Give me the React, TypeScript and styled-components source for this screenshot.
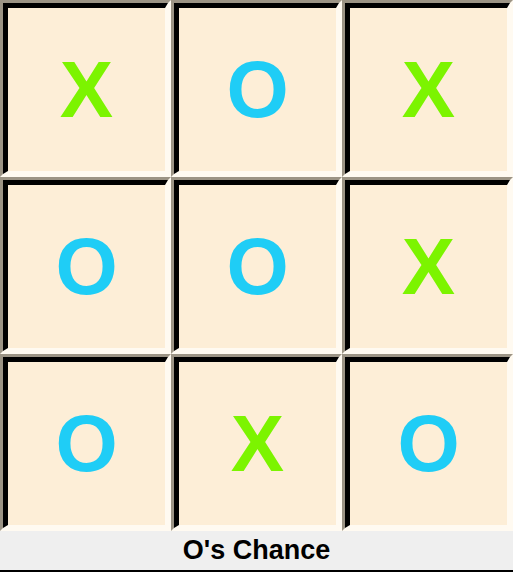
import styled, { createGlobalStyle } from "styled-components";

const GlobalStyle = createGlobalStyle`
  html, body {
    margin: 0;
    padding: 0;
    background: #ffffff;
    font-family: "Liberation Sans", Arial, sans-serif;
  }
`;

const Wrapper = styled.div`
  width: 513px;
  display: flex;
  flex-direction: column;
`;

const Board = styled.div`
  display: grid;
  grid-template-columns: repeat(3, 171px);
  grid-template-rows: repeat(3, 177px);
`;

const Cell = styled.button`
  box-sizing: border-box;
  margin: 0;
  padding: 0;
  border-style: solid;
  border-width: 3px;
  border-color: #9c9485 #fffaf1 #fffaf1 #9c9485;
  background: papayawhip;
  cursor: pointer;
  display: flex;
`;

const Face = styled.div`
  box-sizing: border-box;
  flex: 1;
  border-style: solid;
  border-width: 5px 3px 3px 5px;
  border-color: #000 #fffaf1 #fffaf1 #000;
  background: #fdeed7;
  display: flex;
  align-items: center;
  justify-content: center;
`;

const Mark = styled.span<{ $player: "X" | "O" }>`
  font-family: "Liberation Sans", Arial, sans-serif;
  font-weight: bold;
  font-size: 80px;
  line-height: 1;
  color: ${(p) => (p.$player === "X" ? "#7cf400" : "#1fcdf6")};
`;

const Status = styled.div`
  box-sizing: border-box;
  height: 41px;
  background: #efefef;
  border-bottom: 2px solid #000;
  display: flex;
  align-items: center;
  justify-content: center;
  font-weight: bold;
  font-size: 27px;
  color: #000;
`;

const board: ("X" | "O")[] = ["X", "O", "X", "O", "O", "X", "O", "X", "O"];

function App() {
  return (
    <Wrapper>
      <GlobalStyle />
      <Board>
        {board.map((v, i) => (
          <Cell key={i}>
            <Face>
              <Mark $player={v}>{v}</Mark>
            </Face>
          </Cell>
        ))}
      </Board>
      <Status>O's Chance</Status>
    </Wrapper>
  );
}

export default App;
